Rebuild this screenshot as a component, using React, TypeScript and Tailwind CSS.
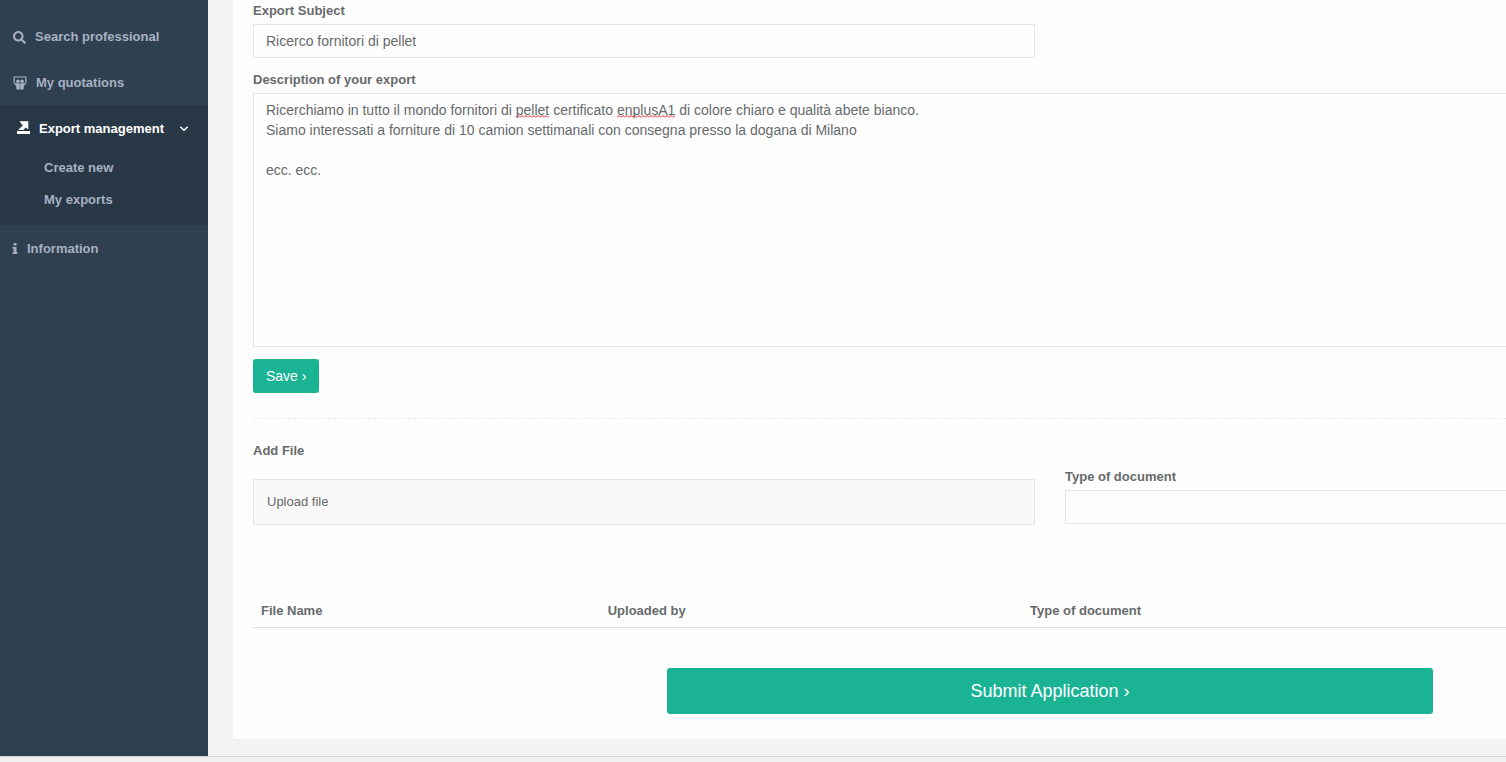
import { useState } from "react";
import { FaSearch } from "react-icons/fa";

const DESCRIPTION = `Ricerchiamo in tutto il mondo fornitori di pellet certificato enplusA1 di colore chiaro e qualità abete bianco.
Siamo interessati a forniture di 10 camion settimanali con consegna presso la dogana di Milano

ecc. ecc.`;

function ExportIcon() {
  return (
    <svg viewBox="0 0 14 16" className="h-4 w-3.5 shrink-0" fill="currentColor" aria-hidden="true">
      <path d="M3.500 .3H12.300V8.600L9.900 6.500 7.300 9H2.200L6.900 4.300 5.300 2.800z" />
      <path d="M1 10h13v3H1z" />
    </svg>
  );
}

function QuotationsIcon() {
  return (
    <svg viewBox="0 0 14 14" className="size-3.5 shrink-0" fill="currentColor" aria-hidden="true">
      <path d="M1.200 6.500V1h11.600v5.500" fill="none" stroke="currentColor" strokeWidth="1.200" />
      <circle cx="4.900" cy="5.200" r="1.800" />
      <circle cx="9.100" cy="5.200" r="1.800" />
      <path d="M.2 6.200C2 7.700 4.500 7.400 6.800 7.200v5.300c0 .8-.8 1.300-1.700 1.300s-1.900-.6-1.900-1.500V9.400C1.900 8.900.7 7.700.2 6.200z" />
      <path d="M13.800 6.200C12 7.700 9.500 7.400 7.200 7.200v5.300c0 .8.8 1.300 1.700 1.300s1.900-.6 1.900-1.500V9.400c1.300-.5 2.500-1.700 3-3.200z" />
    </svg>
  );
}

function InfoIcon() {
  return (
    <svg viewBox="0 0 6 12" className="h-3 w-1.5 shrink-0" fill="currentColor" aria-hidden="true">
      <path d="M1.500 0h3v2.500h-3zM.5 4h4v5.500h1V11H.5V9.500h1v-4h-1z" />
    </svg>
  );
}

function ChevronIcon() {
  return (
    <svg viewBox="0 0 10 10" className="ml-auto mr-[19px] size-2.5 shrink-0" fill="none" stroke="currentColor" strokeWidth="1.500" aria-hidden="true">
      <path d="M1.300 2.800L5 6.300l3.700-3.500" />
    </svg>
  );
}

function Squiggle({ className, id }: { className: string; id: string }) {
  return (
    <svg className={`pointer-events-none absolute h-[3px] ${className}`} aria-hidden="true">
      <defs>
        <pattern id={id} width="4" height="3" patternUnits="userSpaceOnUse">
          <path d="M0 2.500L2 .5L4 2.500" fill="none" stroke="#dc1f2e" strokeWidth="1" />
        </pattern>
      </defs>
      <rect width="100%" height="3" fill={`url(#${id})`} />
    </svg>
  );
}

function Sidebar() {
  return (
    <nav className="w-52 shrink-0 bg-[#2f4050] pt-[13px] text-[13px] font-bold text-[#a7b1c2]">
      <a href="#search" className="flex h-[46px] items-center gap-[9px] pl-[13px] pt-0.5">
        <FaSearch className="size-[13px]" />
        Search professional
      </a>
      <a href="#quotations" className="flex h-[46px] items-center gap-[9px] pl-[13px] pt-0.5">
        <QuotationsIcon />
        My quotations
      </a>
      <div className="bg-[#293846] pb-2.5">
        <a href="#exports" className="flex h-[46px] items-center gap-[9px] pl-4 pt-0.5 text-white">
          <ExportIcon />
          Export management
          <ChevronIcon />
        </a>
        <a href="#create" className="flex h-8 items-center pl-11 pt-0.5">Create new</a>
        <a href="#my-exports" className="flex h-8 items-center pl-11 pt-0.5">My exports</a>
      </div>
      <a href="#information" className="flex h-[46px] items-center gap-[9px] pl-3 pt-0.5">
        <InfoIcon />
        Information
      </a>
    </nav>
  );
}

export default function App() {
  const [subject, setSubject] = useState("Ricerco fornitori di pellet");
  const [description, setDescription] = useState(DESCRIPTION);

  return (
    <div className="flex min-h-screen flex-col bg-[#f3f3f4] font-['Liberation_Sans',Arial,sans-serif] text-[13px] leading-5 text-[#676a6c]">
      <div className="flex flex-1">
        <Sidebar />
        <main className="min-w-0 flex-1 overflow-hidden pb-[17px] pl-[25px]">
          <div className="bg-[#fefefe] pb-[25px] pl-5 pt-px">
            <form className="w-[calc(100%+341px)]" onSubmit={(e) => e.preventDefault()}>
              <div className="grid grid-cols-2 gap-x-[30px]">
                <div>
                  <label htmlFor="subject" className="mb-[3px] block font-bold">Export Subject</label>
                  <input
                    id="subject"
                    type="text"
                    value={subject}
                    onChange={(e) => setSubject(e.target.value)}
                    className="block h-[34px] w-full border border-[#e5e6e7] px-3 text-sm outline-none"
                  />
                </div>
              </div>

              <label htmlFor="description" className="mb-[3px] mt-3 block font-bold">Description of your export</label>
              <div className="relative">
                <textarea
                  id="description"
                  spellCheck={false}
                  value={description}
                  onChange={(e) => setDescription(e.target.value)}
                  className="block h-[254px] w-full resize-none border border-[#e5e6e7] px-3 py-1.5 text-sm leading-5 outline-none"
                />
                {description === DESCRIPTION && (
                  <>
                    <Squiggle id="squiggle-pellet" className="left-[263px] top-[22px] w-[33px]" />
                    <Squiggle id="squiggle-enplus" className="left-[364px] top-[22px] w-[58px]" />
                  </>
                )}
              </div>

              <button type="button" className="mt-3 block h-[34px] rounded-[3px] bg-[#1ab394] px-[13px] text-sm text-white">
                Save ›
              </button>

              <hr className="mt-[25px] border-t border-dashed border-[#e7eaec]" />

              <h2 className="mt-[22px] font-bold">Add File</h2>
              <div className="mt-1.5 grid grid-cols-2 gap-x-[30px]">
                <div className="pt-3">
                  <button type="button" className="block h-[46px] w-full border border-[#e5e6e7] bg-[#f9f9f9] px-[13px] text-left">
                    Upload file
                  </button>
                </div>
                <div>
                  <label htmlFor="doctype" className="mb-[3px] block font-bold">Type of document</label>
                  <select id="doctype" className="block h-[34px] w-full appearance-none border border-[#e5e6e7] px-3 text-sm outline-none">
                    <option value="" />
                  </select>
                </div>
              </div>

              <table className="mt-[68px] w-full table-fixed border-collapse text-left">
                <thead>
                  <tr className="border-b border-[#dddddd]">
                    <th className="w-[21.75%] px-2 pb-1.5 pt-2">File Name</th>
                    <th className="w-[26.5%] px-2 pb-1.5 pt-2">Uploaded by</th>
                    <th className="px-2 pb-1.5 pt-2">Type of document</th>
                  </tr>
                </thead>
              </table>

              <button type="submit" className="mx-auto mt-10 block h-[46px] w-[48.1%] rounded-[3px] bg-[#1ab394] text-lg text-white">
                Submit Application ›
              </button>
            </form>
          </div>
        </main>
      </div>
      <footer className="h-1.5 border-t border-[#d4d4d4] bg-[#f1f0f0]" />
    </div>
  );
}
